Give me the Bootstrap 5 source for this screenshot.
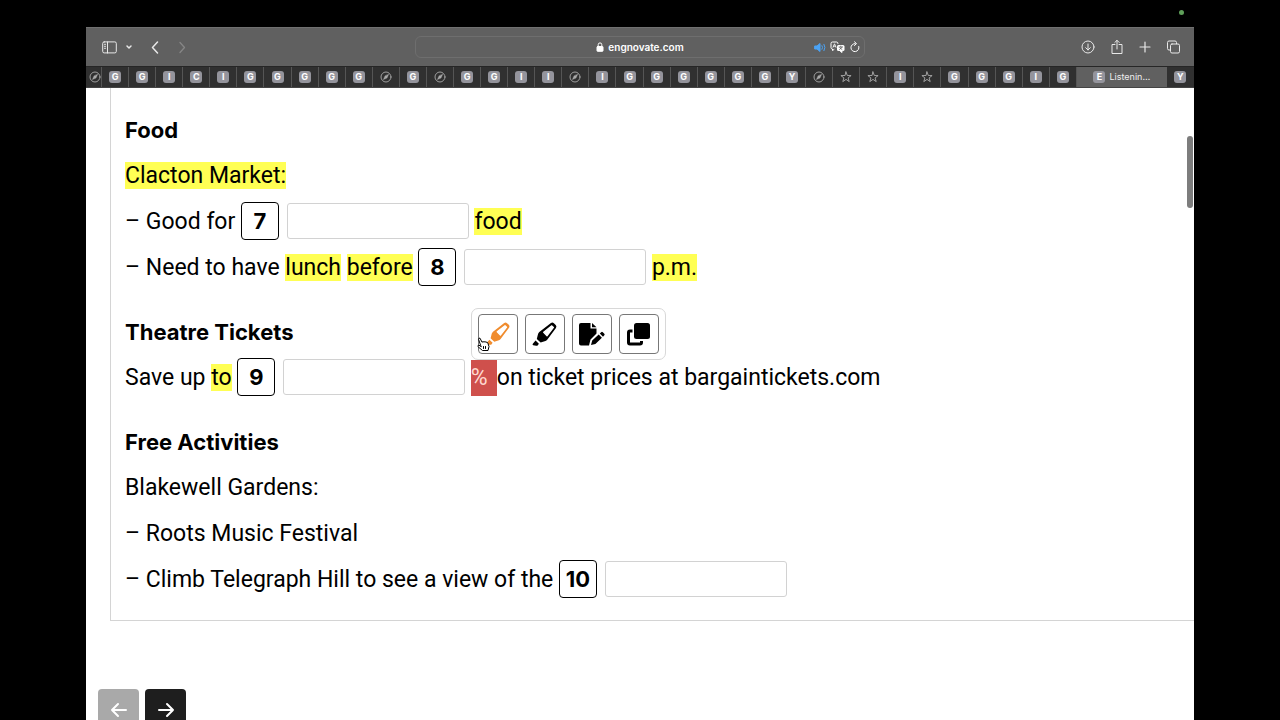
<!DOCTYPE html>
<html lang="en">
<head>
<meta charset="utf-8">
<meta name="viewport" content="width=device-width, initial-scale=1">
<title>Listening test</title>
<link rel="stylesheet" href="https://cdn.jsdelivr.net/npm/bootstrap@5.3.0/dist/css/bootstrap.min.css">
<style>
  body { background: #000; font-family: Inter, "Liberation Sans", sans-serif; color: #000; }
  .screen { height: 100vh; padding: 27px 86px 0; }
  .cam-dot { top: 10px; right: 96px; width: 5px; height: 5px; background: #5fa05a; }
  .toolbar { display: grid; grid-template-columns: 1fr 450px 1fr; height: 39px; background: #606060; border-top: 1px solid #707070; color: #e8e8e8; }
  .toolbar button, .tab-strip button { background: none; border: 0; padding: 0; color: inherit; display: flex; align-items: center; justify-content: center; }
  svg { display: block; fill: none; stroke: currentColor; stroke-linecap: round; stroke-linejoin: round; }
  svg.solid { fill: currentColor; stroke: none; }
  .toolbar .dim { color: #868686; }
  .toolbar .sound { color: #4ba3f5; }
  .toolbar .actions { padding-right: 14px; }
  .address { height: 22px; border: 1px solid #6e6e6e; border-radius: 6px; font-size: 10px; font-weight: 600; color: #fff; }
  .address a { color: inherit; }
  .addr-tools { right: 3px; top: 0; bottom: 0; gap: 4px; }
  .tab-strip { height: 22px; background: #303030; border-top: 1px solid #262626; border-bottom: 1px solid #444; color: #aaa; font-size: 9px; }
  .tab-strip button { flex: 1 1 0; border-right: 1px solid #555; overflow: hidden; }
  .tab-strip .tab-first { flex: 0 0 16px; padding-left: 3px; }
  .tab-strip .tab-last { flex: 0 0 27px; border: 0; }
  .tab-strip .tab-current { flex: 0 0 90px; gap: 4px; background: #606060; border: 0; color: #eee; }
  .fav { width: 12px; height: 12px; line-height: 12px; border-radius: 3px; background: #94949c; color: #fff; font-size: 9px; font-weight: 700; text-align: center; }
  .page-view { min-height: 0; }
  .sheet { margin: 0 -20px 0 24px; padding: 20px 14px 17px; border: 1px solid #d4d4d4; border-top: 0; }
  .sheet section + section { margin-top: 19px; }
  .sheet h2 { font-size: 22px; font-weight: 700; line-height: 45px; margin: 0; }
  .sheet p { font: 23px/46px Roboto, sans-serif; height: 46px; margin: 0; white-space: nowrap; }
  .hl { background: #ffff54; padding: 0; color: #000; display: inline-block; line-height: 27px; }
  .num { display: inline-block; width: 38px; height: 38px; font: 700 22px/36px Inter, sans-serif; border: 1px solid #000; border-radius: 4px; text-align: center; vertical-align: middle; margin-top: -4px; }
  .answer { width: 182px; height: 36px; border: 1px solid #d2d2d2; border-radius: 3px; padding: 0 8px; vertical-align: middle; margin: -4px 0 0 2px; }
  .picked { display: inline-block; width: 26px; height: 36px; line-height: 36px; background: #cf504c; color: #ffd9d0; }
  .tools { left: 0; bottom: 36px; padding: 5px 6px; gap: 7px; background: #fff; border: 1px solid #d8d8d8; border-radius: 7px; z-index: 2; }
  .tools button { width: 40px; height: 40px; padding: 0; border: 1px solid #777; border-radius: 4px; background: #fff; color: #000; display: flex; align-items: center; justify-content: center; }
  .tools .orange { color: #f08c2e; }
  .pointer { left: 5px; top: 28px; }
  .pager { margin: 68px 0 0 12px; gap: 6px; }
  .pager button { width: 41px; height: 42px; border: 0; border-radius: 4px; background: #1e1e1e; color: #fff; padding: 0; display: flex; align-items: center; justify-content: center; }
  .pager button:disabled { background: #a9a9a9; }
  .scroll-thumb { right: 1px; top: 48px; width: 6px; height: 72px; border-radius: 3px; background: #7d7d7d; }
</style>
</head>
<body>
<svg width="0" height="0" class="position-absolute" aria-hidden="true">
  <symbol id="compass" viewBox="0 0 12 12"><circle cx="6" cy="6" r="5"/><path d="M8.6 3.4 7 7 3.4 8.6 5 5Z" fill="currentColor" stroke-width=".4"/></symbol>
  <symbol id="star" viewBox="0 0 12 12"><path d="M6 .9 7.3 4.5 11.1 4.6 8.1 6.9 9.2 10.6 6 8.4 2.8 10.6 3.9 6.9 .9 4.6 4.7 4.5Z"/></symbol>
  <symbol id="marker" viewBox="0 0 24 24"><path d="M.8 20.800 3.400 17.800 6.600 20.800 5.600 22.200Q5 23 4 22.800L1.200 22.400Q0 22 .8 20.800Z" fill="currentColor" stroke="none"/><path d="M4.600 16.200 5.800 11.600Q6.100 10.500 7 9.700L18.200 1Q19.700 0 21 1.200L22.800 2.800Q24 4.200 23 5.800L14.600 17Q13.900 17.900 12.900 18.200L8.300 19.700Z" fill="currentColor" stroke="none"/><path d="M11.200 9.800 19 3.700 20.600 5.200 14.400 13.200Z" fill="#fff" stroke="#fff" stroke-width="1.200"/></symbol>
</svg>
<div class="screen position-relative d-flex flex-column overflow-hidden">
  <span class="cam-dot position-absolute rounded-circle"></span>
  <header>
    <div class="toolbar align-items-center">
      <div class="d-flex align-items-center ps-3">
        <button aria-label="Sidebar"><svg width="15" height="13" viewBox="0 0 15 13"><rect x=".7" y=".9" width="13.600" height="11" rx="1.500"/><path d="M5.500 1v11M2.500 3.300h1M2.500 5.300h1M2.500 7.300h1"/></svg></button>
        <button class="ms-2" aria-label="Tab groups"><svg width="8" height="6" viewBox="0 0 8 6" stroke-width="1.500"><path d="M2 2 4 4 6 2"/></svg></button>
        <button class="ms-3" aria-label="Back"><svg width="13" height="13" viewBox="0 0 13 13" stroke-width="1.500"><path d="M8.500 1 3.500 6.500l5 5.500"/></svg></button>
        <button class="ms-3 dim" aria-label="Forward"><svg width="9" height="13" viewBox="0 0 9 13" stroke-width="1.300"><path d="M2 1.500 6.500 6.500 2 11.500"/></svg></button>
      </div>
      <div class="address position-relative d-flex align-items-center justify-content-center">
        <svg class="me-1" width="8" height="10" viewBox="0 0 8 10"><rect x="1" y="4.500" width="6" height="4.800" rx=".6" fill="currentColor"/><path d="M2.200 4.500V2.700a1.800 1.800 0 0 1 3.600 0v1.800"/></svg>
        <a href="#" class="text-decoration-none">engnovate.com</a>
        <div class="addr-tools position-absolute d-flex align-items-center">
          <button class="sound" aria-label="Mute"><svg width="12" height="11" viewBox="0 0 12 11"><path d="M1 4h2l3-2.500v8L3 7H1Z" fill="currentColor"/><path d="M8 3.700q1.200 1.800 0 3.600M10 2.300q2 3.200 0 6.400"/></svg></button>
          <button aria-label="Translate"><svg width="15" height="12" viewBox="0 0 15 12"><path d="M4 8.500 2.500 9.500V8Q1 8 1 6.500V2.500Q1 1 2.500 1h4Q8 1 8 2.500"/><path d="M3 6.300 4.500 2.800 6 6.300M3.500 5.200h2" stroke-width=".8"/><rect x="7" y="4" width="7.500" height="6" rx="1.500" fill="currentColor" stroke="none"/><path d="M12 9.500v2L9.500 9.500" fill="currentColor"/><path d="M9 6h3.600M10.800 5v1M9.500 8.500 12 6.300M9.800 6.800 12 8.500" stroke="#555" stroke-width=".7"/></svg></button>
          <button aria-label="Reload"><svg width="12" height="12" viewBox="0 0 12 12"><path d="M9.800 5.500A4 4 0 1 1 6.200 2.600M5.500 .8 7.500 2.600 5.500 4.500"/></svg></button>
        </div>
      </div>
      <div class="actions d-flex align-items-center justify-content-end gap-3">
        <button aria-label="Downloads"><svg width="14" height="14" viewBox="0 0 14 14"><circle cx="7" cy="7" r="6"/><path d="M7 4v6M4.700 7.700 7 10l2.300-2.300"/></svg></button>
        <button aria-label="Share"><svg width="12" height="16" viewBox="0 0 12 16"><path d="M4 5.500H1V14.500h10V5.500H8M6 10V1.500M3.800 3.500 6 1.300l2.200 2.200"/></svg></button>
        <button aria-label="New tab"><svg width="12" height="12" viewBox="0 0 12 12" stroke-width="1.200"><path d="M6 1v10M1 6h10"/></svg></button>
        <button aria-label="Tab overview"><svg width="13" height="14" viewBox="0 0 13 14"><rect x="3.500" y="4" width="9" height="9" rx="1.500"/><path d="M3.300 10H2Q.5 10 .5 8.500V2.500Q.5 1 2 1h6Q9.500 1 9.500 2.500V3.800"/></svg></button>
      </div>
    </div>
    <div class="tab-strip d-flex" id="tabs"></div>
  </header>

  <main class="page-view flex-grow-1 bg-white position-relative overflow-hidden">
    <div class="sheet">
      <section>
        <h2>Food</h2>
        <p><mark class="hl">Clacton Market:</mark></p>
        <p>– Good for <label class="num" for="q7">7</label> <input class="answer" id="q7" type="text"> <mark class="hl">food</mark></p>
        <p>– Need to have <mark class="hl">lunch</mark> <mark class="hl">before</mark> <label class="num" for="q8">8</label> <input class="answer" id="q8" type="text"> <mark class="hl">p.m.</mark></p>
      </section>
      <section>
        <h2>Theatre Tickets</h2>
        <p>Save up <mark class="hl">to</mark> <label class="num" for="q9">9</label> <input class="answer" id="q9" type="text"> <span class="picked position-relative">%<span class="tools position-absolute d-flex">
          <button aria-label="Highlight in colour" class="orange"><svg width="24" height="24"><use href="#marker"/></svg></button>
          <button aria-label="Highlight"><svg width="25" height="25"><use href="#marker"/></svg></button>
          <button aria-label="Add note"><svg class="solid" width="28" height="25" viewBox="0 0 28 25"><path d="M1 3Q1 1 3 1h9.500v5.500H18.500V11.500L12.500 17.500 11 23.500H3Q1 23.500 1 21.500Z"/><path d="M14 1 18.500 5.300H14ZM14.200 18.500l6.500-6 3.200 3.200-6.500 6.200-4.400 1.200ZM21.800 11.500l1.400-1.300q.8-.7 1.600 0l1.500 1.500q.8.8 0 1.600L25 14.700Z"/></svg></button>
          <button aria-label="Copy"><svg width="25" height="25" viewBox="0 0 25 25"><rect x="8" y="1" width="16" height="16" rx="2.500" fill="currentColor" stroke="none"/><path d="M6.500 9H4Q2.500 9 2.500 10.500v10Q2.500 22 4 22h10q1.500 0 1.500-1.500V19" stroke-width="3" stroke-linecap="butt"/></svg></button>
          <svg class="pointer position-absolute" width="13" height="15" viewBox="0 0 13 15"><path d="M3.500 8 1.500 2.200Q1.600 .7 3 1.200L5 5.200Q6 4.200 7 5q1-.8 2 .2 1.400-.4 1.800.8L12 9.500 11 13.500H5.500L1 9.700Q.6 8 2 8.200l2 1.300Z" fill="#fff" stroke="#000"/><path d="M6.500 9.500v2M8.500 9.500v2" stroke="#000"/></svg>
        </span></span>on ticket prices at bargaintickets.com</p>
      </section>
      <section>
        <h2>Free Activities</h2>
        <p>Blakewell Gardens:</p>
        <p>– Roots Music Festival</p>
        <p>– Climb Telegraph Hill to see a view of the <label class="num" for="q10">10</label> <input class="answer" id="q10" type="text"></p>
      </section>
    </div>
    <div class="pager d-flex">
      <button disabled aria-label="Previous part"><svg width="18" height="16" viewBox="0 0 18 16" stroke-width="2"><path d="M16 8H2M8 2 2 8l6 6"/></svg></button>
      <button aria-label="Next part"><svg width="18" height="16" viewBox="0 0 18 16" stroke-width="2"><path d="M2 8h14M10 2l6 6-6 6"/></svg></button>
    </div>
    <span class="scroll-thumb position-absolute"></span>
  </main>
</div>
<script src="https://cdn.jsdelivr.net/npm/bootstrap@5.3.0/dist/js/bootstrap.bundle.min.js"></script>
<script>
  // o = compass icon, * = star icon, any other letter = site initial
  const icon = c => c === 'o' || c === '*'
    ? `<svg width="12" height="12" stroke-width=".9"><use href="#${c === 'o' ? 'compass' : 'star'}"/></svg>`
    : `<span class="fav">${c}</span>`;
  const open = [...'GGICIGGGGGoGoGGIIoIGGGGGGYo**I*GGGIG'];
  document.getElementById('tabs').innerHTML =
    `<button class="tab-first" aria-label="Tab">${icon('o')}</button>` +
    open.map(c => `<button aria-label="Tab">${icon(c)}</button>`).join('') +
    `<button class="tab-current">${icon('E')}<span>Listenin…</span></button>` +
    `<button class="tab-last" aria-label="Tab">${icon('Y')}</button>`;
</script>
</body>
</html>
